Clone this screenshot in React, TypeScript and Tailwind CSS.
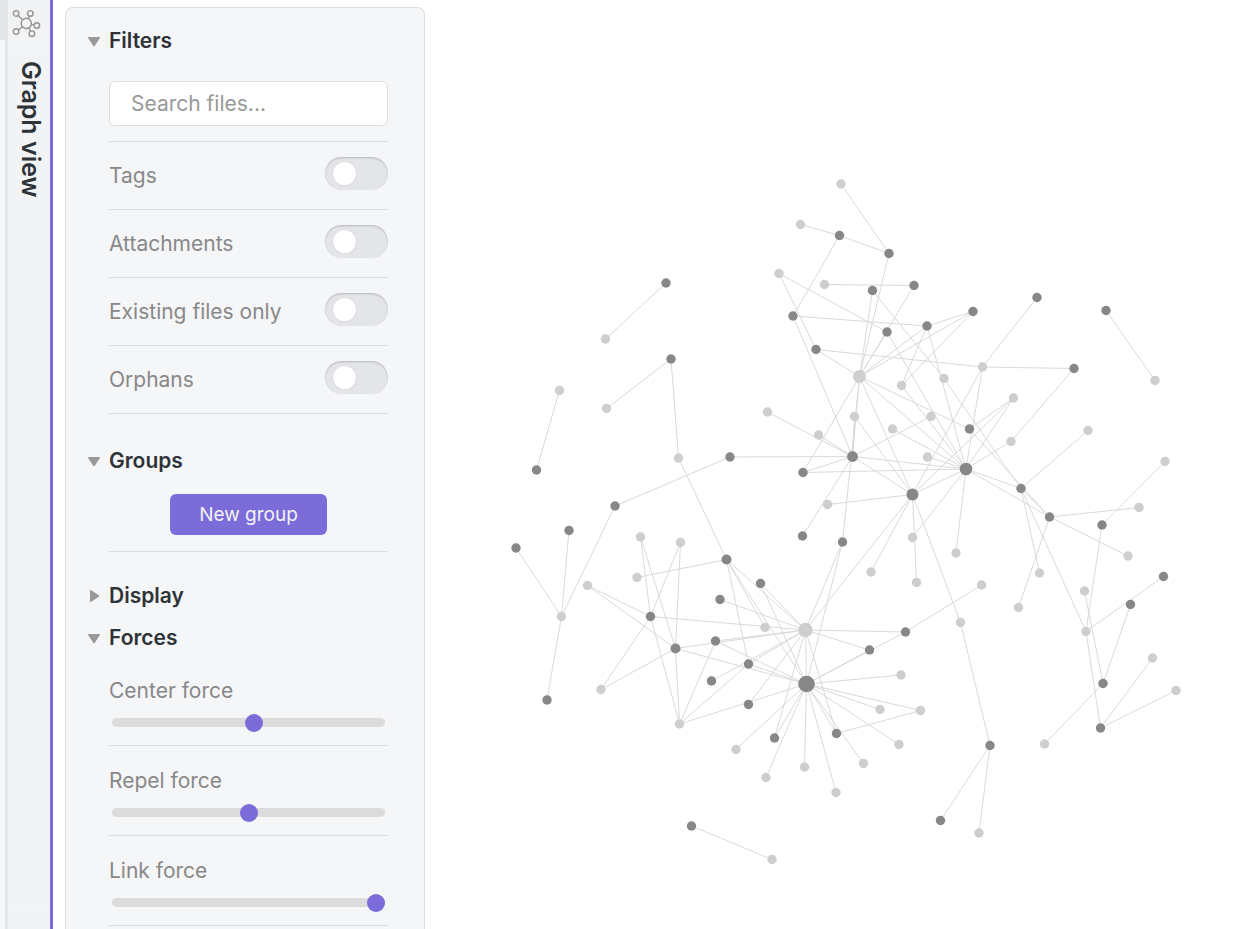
import { useState } from 'react';
import type { ReactNode } from 'react';
import { clsx } from 'clsx';

type GraphNode = [x: number, y: number, kind: 'note' | 'missing', r?: number];

const nodes: GraphNode[] = [
  // 0 - 9
  [841, 184, 'missing'], [800.5, 224.5, 'missing'], [839.5, 235.5, 'note'], [889, 253.5, 'note'], [779, 273.5, 'missing'],
  [824.5, 284.5, 'missing'], [872.5, 290.5, 'note'], [914, 285.5, 'note'], [793, 316, 'note'], [887, 332, 'note'],
  // 10 - 19
  [927, 326, 'note'], [973, 311.5, 'note'], [816, 349.5, 'note'], [859.5, 376.5, 'missing', 6.5], [901.5, 385.5, 'missing'],
  [944, 378.5, 'missing'], [982.5, 367, 'missing'], [1037, 297.5, 'note'], [1106, 310.5, 'note'], [1155, 380.5, 'missing'],
  // 20 - 29
  [1074, 368.5, 'note'], [1013.5, 398, 'missing'], [1011, 441.5, 'missing'], [1088, 430.5, 'missing'], [1165, 461.5, 'missing'],
  [969.5, 429, 'note'], [966, 469, 'note', 6.3], [1021, 488.5, 'note'], [1049.5, 517, 'note'], [1139, 507.5, 'missing'],
  // 30 - 39
  [1102, 525, 'note'], [1128, 556, 'missing'], [767.5, 412, 'missing'], [818.5, 435, 'missing'], [854.5, 416.5, 'missing'],
  [892.5, 429, 'missing'], [931, 416.5, 'missing'], [852.5, 456.5, 'note', 5.4], [803, 472.5, 'note'], [927.5, 457, 'missing'],
  // 40 - 49
  [912.5, 494.5, 'note', 6], [827.5, 504.5, 'missing'], [802.5, 536, 'note'], [842.5, 542, 'note'], [912.5, 537.5, 'missing'],
  [871, 572, 'missing'], [916.5, 582.5, 'missing'], [956, 553, 'missing'], [981.5, 585, 'missing'], [960.5, 622.5, 'missing'],
  // 50 - 59
  [1018.5, 607.5, 'missing'], [1039.5, 573, 'missing'], [1084.5, 591, 'missing'], [1086, 631.5, 'missing'], [1163.5, 576.5, 'note'],
  [1130.5, 604.5, 'note'], [1103, 683.5, 'note'], [1152.5, 658, 'missing'], [1176, 690.5, 'missing'], [1100.5, 728, 'note'],
  // 60 - 69
  [1044.5, 744, 'missing'], [990, 745.5, 'note'], [940.5, 820.5, 'note'], [979, 833, 'missing'], [666, 283, 'note'],
  [605.5, 339, 'missing'], [671, 359, 'note'], [606.5, 408.5, 'missing'], [678.5, 458, 'missing'], [559.5, 390.5, 'missing'],
  // 70 - 79
  [536.5, 470, 'note'], [730, 457, 'note'], [615, 506, 'note'], [569, 530.5, 'note'], [516, 548, 'note'],
  [561.5, 616.5, 'missing'], [547, 700, 'note'], [640.5, 537, 'missing'], [680.5, 542.5, 'missing'], [637, 577.5, 'missing'],
  // 80 - 89
  [587.5, 585.5, 'missing'], [726.5, 559.5, 'note', 5], [650.5, 616.5, 'note'], [675.5, 648.5, 'note', 5], [601, 689.5, 'missing'],
  [679.5, 724, 'missing'], [720, 599.5, 'note'], [760.5, 583.5, 'note'], [765, 627.5, 'missing'], [805.5, 630, 'missing', 7.2],
  // 90 - 99
  [715.5, 641, 'note'], [748.5, 664, 'note'], [711.5, 681, 'note'], [748.5, 704.5, 'note'], [806.5, 684, 'note', 8.3],
  [869.5, 650, 'note'], [905.5, 632, 'note'], [901, 675, 'missing'], [880, 709.5, 'missing'], [920.5, 710.5, 'missing'],
  // 100 - 109
  [836.5, 733.5, 'note'], [899, 744.5, 'missing'], [863.5, 763.5, 'missing'], [836, 792.5, 'missing'], [804.5, 767, 'missing'],
  [774.5, 738, 'note'], [766, 777.5, 'missing'], [736, 749.5, 'missing'], [691.5, 826, 'note'], [772, 859.5, 'missing'],
];

const links: [number, number][] = [
  [0, 3], [1, 2], [2, 3], [2, 8], [3, 13], [4, 9], [4, 12], [5, 7], [6, 13], [6, 15], [7, 13], [9, 13], [9, 26],
  [8, 10], [8, 37], [10, 11], [10, 13], [10, 14], [10, 26], [11, 13], [11, 14], [12, 13], [12, 16],
  [13, 38], [13, 37], [13, 43], [13, 40], [13, 26], [13, 25], [14, 26], [15, 27],
  [16, 17], [16, 20], [16, 26], [16, 40], [18, 19], [20, 22], [21, 25], [21, 26], [21, 40], [22, 26], [23, 27], [24, 30],
  [25, 28], [26, 27], [26, 28], [26, 35], [26, 37], [26, 38], [26, 39], [26, 40], [26, 44], [26, 47],
  [27, 28], [27, 51], [27, 53], [28, 29], [28, 31], [28, 50], [30, 53],
  [34, 37], [34, 40], [36, 37], [32, 37], [33, 37], [37, 38], [37, 40], [37, 42], [37, 71],
  [40, 41], [40, 45], [40, 46], [40, 49], [40, 89], [43, 89], [43, 94], [48, 96], [49, 61], [61, 62], [61, 63],
  [52, 56], [53, 54], [53, 59], [55, 56], [56, 60], [57, 59], [58, 59],
  [64, 65], [66, 67], [66, 68], [68, 81], [69, 70], [71, 72], [72, 75], [73, 75], [74, 75], [75, 76],
  [77, 82], [77, 83], [78, 82], [78, 83], [79, 81], [80, 82], [80, 83], [82, 84], [83, 84], [82, 85], [83, 85],
  [82, 89], [83, 89], [83, 94], [81, 88], [81, 89], [81, 91], [81, 94], [86, 89], [87, 89], [87, 94],
  [85, 90], [89, 90], [90, 94], [85, 91], [89, 91], [91, 94], [89, 92], [89, 93], [85, 94],
  [89, 94], [89, 95], [89, 96], [94, 95], [94, 96], [89, 100], [89, 105],
  [94, 97], [94, 98], [94, 99], [94, 100], [94, 101], [94, 102], [94, 103], [94, 104], [94, 105], [94, 106], [94, 107],
  [99, 100], [108, 109],
];

const filters = ['Tags', 'Attachments', 'Existing files only', 'Orphans'];

const forces = [
  { label: 'Center force', min: 0, max: 1, value: 0.52 },
  { label: 'Repel force', min: 0, max: 20, value: 10 },
  { label: 'Link force', min: 0, max: 1, value: 1 },
];

function GraphIcon() {
  return (
    <svg viewBox="0 0 30 30" className="size-[30px]" fill="none" stroke="#939393" strokeWidth="1.4" aria-hidden="true">
      <circle cx="14.3" cy="14.4" r="5.1" />
      <circle cx="4.1" cy="4.4" r="2.8" />
      <circle cx="18.3" cy="4.4" r="2.8" />
      <circle cx="24.8" cy="16.5" r="2.8" />
      <circle cx="19.9" cy="24.7" r="2.8" />
      <circle cx="4.1" cy="22.6" r="2.8" />
      <path d="M6.1 6.4L10.7 10.8M17.5 7.1L16.3 9.7M19.3 15.4L22 15.9M16.8 18.9L18.5 22.2M10.7 18L6.3 20.8" />
    </svg>
  );
}

function Section({ title, open, onToggle, children }: { title: string; open: boolean; onToggle: () => void; children: ReactNode }) {
  return (
    <section>
      <button
        type="button"
        aria-expanded={open}
        onClick={onToggle}
        className="flex h-9 w-full items-center gap-2 text-[21px] font-semibold text-[#2e3338]"
      >
        <svg viewBox="0 0 14 14" className={clsx('size-3.5', !open && '-rotate-90')} fill="#999" aria-hidden="true">
          <path d="M1.6 3h10.8q1 0 .5.9L7.8 11.8q-.8 1-1.6 0L1.1 3.9Q.6 3 1.6 3z" />
        </svg>
        {title}
      </button>
      {open && <div className="pl-[22px]">{children}</div>}
    </section>
  );
}

function ToggleRow({ label }: { label: string }) {
  return (
    <label className="flex h-[68px] items-center justify-between border-b border-[#dcddde] text-[#888]">
      {label}
      <input
        type="checkbox"
        className="relative mb-1 h-[33px] w-[63px] appearance-none rounded-full bg-[#e3e5e8] shadow-[inset_0_1px_2px_rgba(0,0,0,0.2)] before:absolute before:top-[5px] before:left-2 before:size-[23px] before:rounded-full before:bg-white before:shadow-[0_0_2px_rgba(0,0,0,0.12)] checked:bg-[#7b6cd9] checked:before:left-8"
      />
    </label>
  );
}

function SliderRow({ label, min, max, value }: { label: string; min: number; max: number; value: number }) {
  return (
    <label className="flex h-[90px] flex-col justify-end border-b border-[#dcddde] pb-[18px] text-[#888]">
      {label}
      <input
        type="range"
        min={min}
        max={max}
        step={0.01}
        defaultValue={value}
        className="mx-[3px] mt-[13px] h-[9px] appearance-none rounded-full bg-[#dcdcdc] [&::-webkit-slider-thumb]:size-[18px] [&::-webkit-slider-thumb]:appearance-none [&::-webkit-slider-thumb]:rounded-full [&::-webkit-slider-thumb]:bg-[#7b6cd9]"
      />
    </label>
  );
}

function Controls() {
  const [open, setOpen] = useState({ filters: true, groups: true, display: false, forces: true });
  const toggle = (key: keyof typeof open) => setOpen({ ...open, [key]: !open[key] });

  return (
    <aside className="mt-[7px] ml-3 w-[360px] shrink-0 overflow-hidden rounded-t-lg border border-b-0 border-[#dcddde] bg-[#f5f6f8] pt-[15px] pr-9 pl-[21px] text-[21px] leading-7">
      <Section title="Filters" open={open.filters} onToggle={() => toggle('filters')}>
        <div className="border-b border-[#dcddde] pt-[22px] pb-[15px]">
          <input
            type="text"
            aria-label="Search files"
            placeholder="Search files..."
            className="block h-[45px] w-full rounded-md border border-[#dcddde] bg-white px-[21px] placeholder:text-[#999]"
          />
        </div>
        {filters.map((label) => (
          <ToggleRow key={label} label={label} />
        ))}
      </Section>
      <div className="mt-[29px]">
        <Section title="Groups" open={open.groups} onToggle={() => toggle('groups')}>
          <div className="flex justify-center border-b border-[#dcddde] pt-[15px] pb-4">
            <button type="button" className="h-[41px] rounded-md bg-[#7b6cd9] px-[29px] text-[19px] text-[#f2f3f5]">
              New group
            </button>
          </div>
        </Section>
      </div>
      <div className="mt-[26px] flex flex-col gap-1.5">
        <Section title="Display" open={open.display} onToggle={() => toggle('display')}>
          {null}
        </Section>
        <Section title="Forces" open={open.forces} onToggle={() => toggle('forces')}>
          {forces.map((force) => (
            <SliderRow key={force.label} {...force} />
          ))}
        </Section>
      </div>
    </aside>
  );
}

function Graph() {
  return (
    <svg viewBox="425 0 808 929" className="h-full min-w-0 flex-1" role="img" aria-label="Graph of linked notes">
      <g stroke="#dadada" strokeWidth="1">
        {links.map(([a, b]) => (
          <line key={`${a}-${b}`} x1={nodes[a][0]} y1={nodes[a][1]} x2={nodes[b][0]} y2={nodes[b][1]} />
        ))}
      </g>
      {nodes.map(([x, y, kind, r = 4.7], i) => (
        <circle key={i} cx={x} cy={y} r={r} fill={kind === 'note' ? '#878787' : '#cecece'} />
      ))}
    </svg>
  );
}

export default function App() {
  return (
    <div className="flex h-screen overflow-hidden bg-white font-['Inter',sans-serif]">
      {/* Edge of the previous pane */}
      <div className="w-2 shrink-0 border-r-3 border-[#e3e5e8] bg-[#f5f6f8]">
        <div className="h-10 bg-[#e3e5e8]" />
      </div>

      {/* Stacked pane header */}
      <header className="flex w-[45px] shrink-0 flex-col items-center border-r-3 border-[#7b6cd9] bg-[#f2f3f5]">
        <div className="flex h-[39px] w-full items-end pl-1">
          <GraphIcon />
        </div>
        <div className="flex w-full flex-1 items-start justify-center bg-linear-to-b from-[#f5f6f8] to-[#f2f3f5] to-[15px] pt-[22px] pl-1">
          <h1 className="text-[25px] leading-8 font-semibold text-[#2e3338] [writing-mode:vertical-rl]">Graph view</h1>
        </div>
        <div className="h-5 w-full border-t border-[#f5f6f8]" />
      </header>

      <main className="flex min-w-0 flex-1">
        <Controls />
        <Graph />
      </main>
    </div>
  );
}
